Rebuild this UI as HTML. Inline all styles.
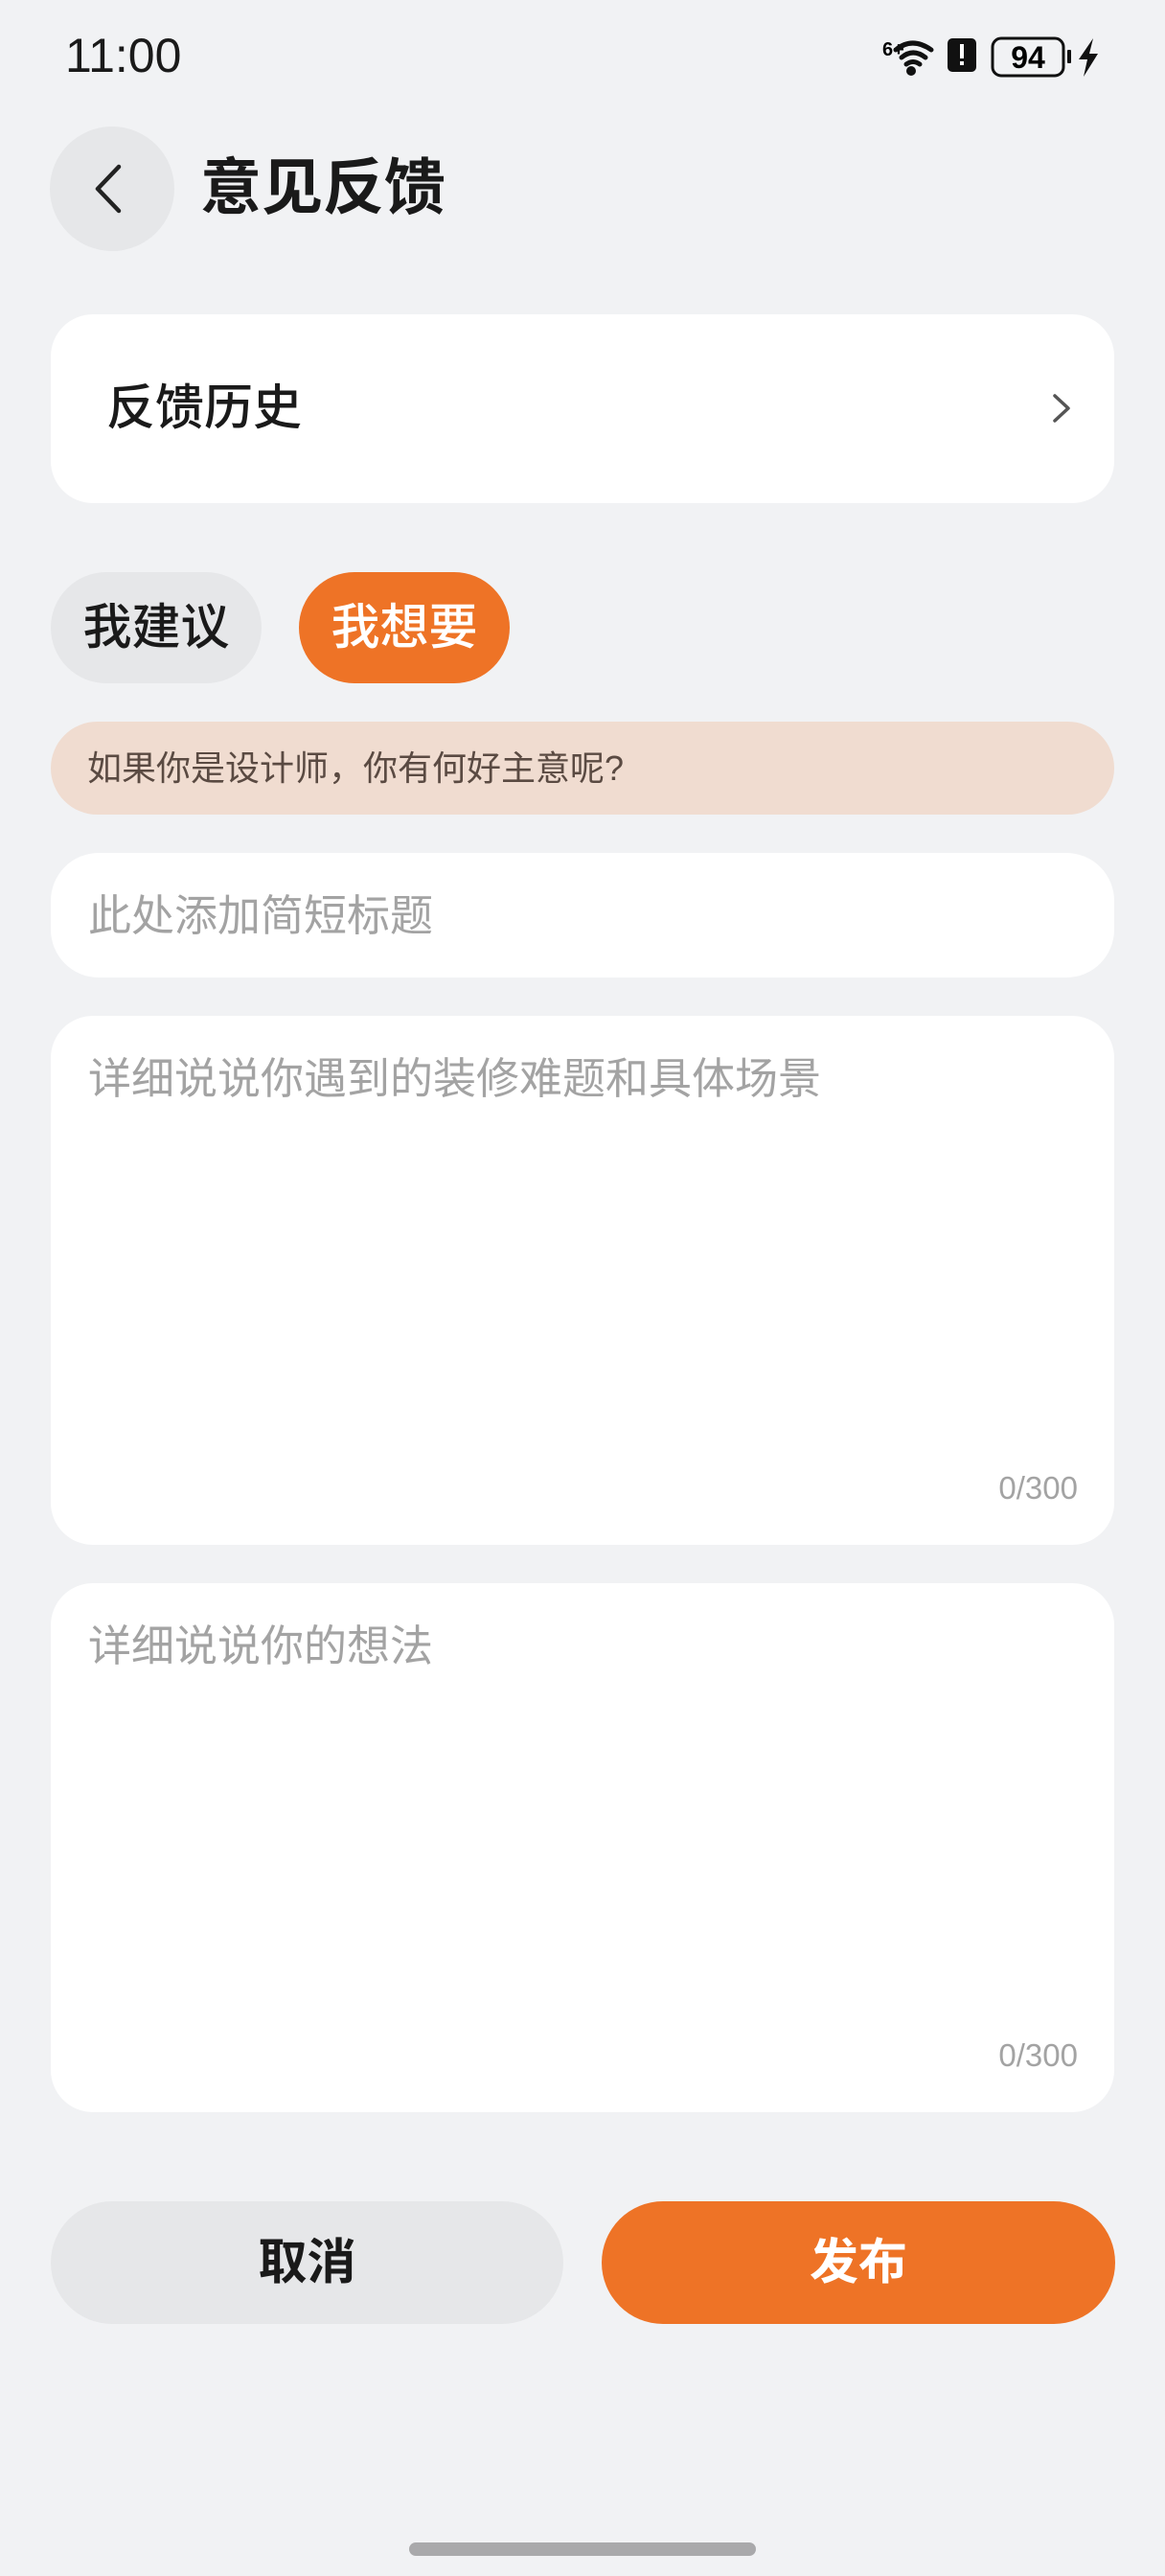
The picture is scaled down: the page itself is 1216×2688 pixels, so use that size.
<!DOCTYPE html>
<html><head><meta charset="utf-8"><style>
*{margin:0;padding:0;box-sizing:border-box}
body{width:1216px;height:2688px;background:#f1f2f4;font-family:"Liberation Sans","Noto Sans CJK SC",sans-serif;position:relative;overflow:hidden;color:#1a1a1a}
.a{position:absolute}
.card{position:absolute;left:53px;width:1110px;background:#fff;border-radius:44px}
.ph{position:absolute;left:40px;font-size:45px;color:#a3a3a3}
.cnt{position:absolute;right:38px;font-size:33px;color:#a3a3a3}
</style></head><body>
<div class="a" style="left:68px;top:28px;font-size:50px;line-height:60px">11:00</div>
<svg class="a" style="left:918px;top:34px" width="240" height="50" viewBox="918 34 240 50">
<text x="921" y="58" font-size="20" font-weight="bold" font-family="Liberation Sans">6+</text>
<path d="M935 52 Q952 38 972 52" stroke="#111" stroke-width="5" fill="none" stroke-linecap="round"/>
<path d="M941 60 Q953 50 966 60" stroke="#111" stroke-width="5" fill="none" stroke-linecap="round"/>
<path d="M946 67 Q953 62 960 67" stroke="#111" stroke-width="5" fill="none" stroke-linecap="round"/>
<circle cx="951" cy="74" r="5" fill="#111"/>
<rect x="989" y="40" width="30" height="35" rx="5" fill="#111"/>
<rect x="1002" y="46" width="4" height="15" fill="#fff"/><rect x="1002" y="64" width="4" height="4" fill="#fff"/>
<rect x="1036" y="40" width="74" height="39" rx="9" fill="none" stroke="#111" stroke-width="3"/>
<text x="1073" y="71" font-size="32" font-weight="bold" text-anchor="middle" font-family="Liberation Sans">94</text>
<rect x="1114" y="52" width="4" height="14" rx="1" fill="#111"/>
<path d="M1141 40 L1126 62 L1135 62 L1131 80 L1146 56 L1137 56 Z" fill="#111"/>
</svg>
<div class="a" style="left:52px;top:132px;width:130px;height:130px;border-radius:50%;background:#e6e7e9"></div>
<svg class="a" style="left:52px;top:132px" width="130" height="130"><path d="M72 42 L50 65 L72 88" stroke="#222" stroke-width="4.5" fill="none" stroke-linecap="round" stroke-linejoin="round"/></svg>
<div class="a" style="left:209px;top:158px;font-size:64px;font-weight:bold;line-height:76px">意见反馈</div>
<div class="card" style="top:328px;height:197px"><div class="a" style="left:58px;top:67px;font-size:51px;line-height:62px;font-weight:500">反馈历史</div>
<svg class="a" style="left:1035px;top:78px" width="40" height="40"><path d="M13 7 L27 20 L13 33" stroke="#555" stroke-width="3.5" fill="none" stroke-linecap="round" stroke-linejoin="round"/></svg></div>
<div class="a" style="left:53px;top:597px;width:220px;height:116px;border-radius:58px;background:#e6e7e9;font-size:51px;line-height:116px;text-align:center;font-weight:500">我建议</div>
<div class="a" style="left:312px;top:597px;width:220px;height:116px;border-radius:58px;background:#ee7326;color:#fff;font-size:51px;line-height:116px;text-align:center;font-weight:500">我想要</div>
<div class="a" style="left:53px;top:753px;width:1110px;height:97px;border-radius:49px;background:#f0dcd0;color:#5a4a42;font-size:36px;line-height:97px;padding-left:38px">如果你是设计师，你有何好主意呢?</div>
<div class="card" style="top:890px;height:130px;border-radius:50px"><div class="ph" style="top:38px;left:39px;line-height:56px">此处添加简短标题</div></div>
<div class="card" style="top:1060px;height:552px"><div class="ph" style="top:38px;left:39px;line-height:56px">详细说说你遇到的装修难题和具体场景</div><div class="cnt" style="bottom:40px">0/300</div></div>
<div class="card" style="top:1652px;height:552px"><div class="ph" style="top:38px;left:39px;line-height:56px">详细说说你的想法</div><div class="cnt" style="bottom:40px">0/300</div></div>
<div class="a" style="left:53px;top:2297px;width:535px;height:128px;border-radius:64px;background:#e6e7e9;font-size:51px;font-weight:bold;line-height:128px;text-align:center">取消</div>
<div class="a" style="left:628px;top:2297px;width:536px;height:128px;border-radius:64px;background:#ee7326;color:#fff;font-size:51px;font-weight:bold;line-height:128px;text-align:center">发布</div>
<div class="a" style="left:427px;top:2653px;width:362px;height:14px;border-radius:7px;background:#a9a9ab"></div>
</body></html>
